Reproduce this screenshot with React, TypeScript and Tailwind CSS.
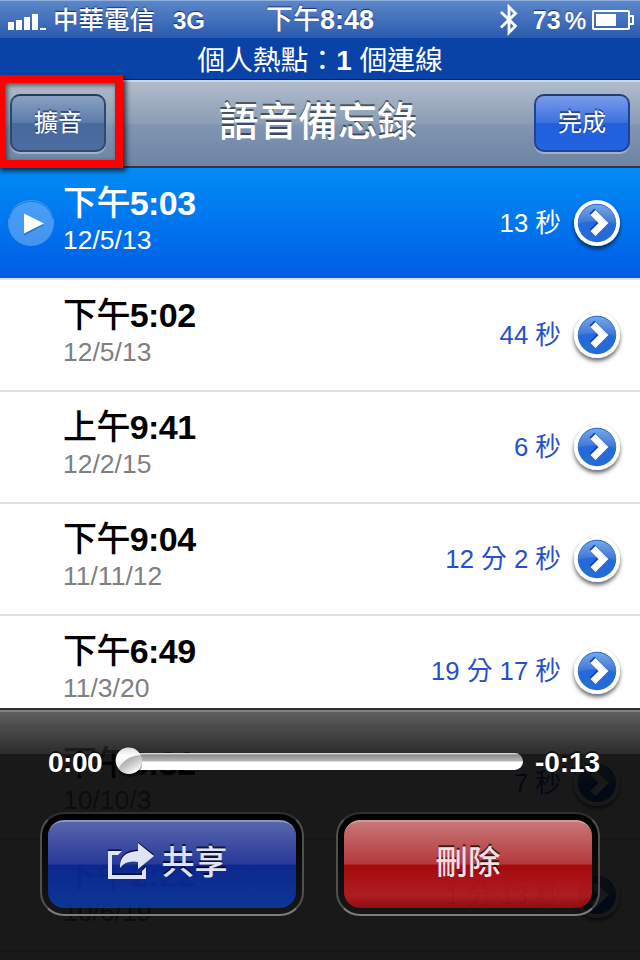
import React from 'react'

interface Memo {
  period: string
  time: string
  date: string
  duration: string
}

const memos: Memo[] = [
  { period: '下午', time: '5:03', date: '12/5/13', duration: '13 秒' },
  { period: '下午', time: '5:02', date: '12/5/13', duration: '44 秒' },
  { period: '上午', time: '9:41', date: '12/2/15', duration: '6 秒' },
  { period: '下午', time: '9:04', date: '11/11/12', duration: '12 分 2 秒' },
  { period: '下午', time: '6:49', date: '11/3/20', duration: '19 分 17 秒' },
  { period: '下午', time: '3:32', date: '10/10/3', duration: '7 秒' },
  { period: '下午', time: '2:22', date: '10/6/19', duration: '1 分 13 秒' },
]

const DetailButton = () => (
  <svg className="ml-[8px] shrink-0" width="56" height="64" viewBox="0 0 56 64">
    <defs>
      <linearGradient id="disc" x1="0" y1="0" x2="0" y2="1">
        <stop offset="0" stopColor="#7aa5e6" />
        <stop offset="1" stopColor="#3a74d4" />
      </linearGradient>
      <filter id="discShadow" x="-30%" y="-30%" width="160%" height="160%">
        <feDropShadow dx="0" dy="3" stdDeviation="2" floodColor="#000" floodOpacity="0.6" />
      </filter>
    </defs>
    <circle cx="28" cy="32" r="23" fill="#fff" filter="url(#discShadow)" />
    <circle cx="28" cy="32" r="19.2" fill="#246ad9" />
    <path d="M8.800 33A19.2 19.2 0 0 1 47.200 33Q28 27 8.800 33Z" fill="url(#disc)" />
    <path d="M23 20L33.500 30.500L23 41" fill="none" stroke="#1046b4" strokeWidth="7" />
    <path d="M24 21.500L34.500 32L24 42.500" fill="none" stroke="#fff" strokeWidth="7" />
  </svg>
)

const MemoRow = ({ memo, selected }: { memo: Memo; selected: boolean }) => (
  <li
    className={`flex h-[112px] shrink-0 items-center border-b-2 border-[#e0e0e0] pr-[15px] ${
      selected ? 'bg-linear-to-b from-[#058cf5] to-[#015de6] text-white' : 'bg-white text-black'
    }`}
  >
    <div className="flex w-[63px] shrink-0 items-center pl-2">
      {selected && (
        <svg width="46" height="46" viewBox="0 0 46 46">
          <circle cx="23" cy="23" r="23" fill="#fff" fillOpacity="0.27" />
          <path d="M1 19A22.5 22.5 0 0 1 45 19" fill="none" stroke="#0b5cb8" strokeOpacity="0.6" />
          <path d="M16 15.500L36 25L16 35.500Z" fill="#0a4ea8" fillOpacity="0.5" />
          <path d="M16 13.500L36 23.500L16 33.500Z" fill="#fff" />
        </svg>
      )}
    </div>
    <div className="flex-1 pb-1">
      <div className="h-[38px] text-[34px] leading-[38px] font-bold tracking-[-0.6px]">
        <span className="font-medium">{memo.period}</span>
        {memo.time}
      </div>
      <div className={`h-[36px] text-[26.5px] leading-[36px] ${selected ? 'text-white' : 'text-[#7f7f7f]'}`}>
        {memo.date}
      </div>
    </div>
    <div className={`text-[25.7px] leading-[36px] ${selected ? 'text-white' : 'text-[#2450c8]'}`}>
      {memo.duration}
    </div>
    <DetailButton />
  </li>
)

const StatusBar = () => (
  <div className="flex h-[38px] shrink-0 items-center border-t border-[#8fb0dc] bg-linear-to-b from-[#5b86c9] to-[#2a5bb0] text-white [text-shadow:0_-1px_1px_rgba(0,20,80,0.7)]">
    <div className="flex flex-1 items-center pl-2">
      <svg className="mt-[3px]" width="38" height="17" viewBox="0 0 38 17" fill="#fff">
        <rect x="0" y="9" width="6" height="8" />
        <rect x="8" y="7" width="6" height="10" />
        <rect x="16" y="4" width="6" height="13" />
        <rect x="24" y="1" width="6" height="16" />
        <rect x="32" y="15" width="6" height="2" />
      </svg>
      <span className="mt-[2px] ml-[7px] text-[25.5px] leading-[37px] font-medium">中華電信</span>
      <span className="mt-[2px] ml-[18px] text-[24px] leading-[37px] font-bold">3G</span>
    </div>
    <span className="mt-px -ml-[2px] text-[27px] leading-[37px] font-bold">
      <span className="font-medium">下午</span>8:48
    </span>
    <div className="flex flex-1 items-center justify-end pr-[6px]">
      <svg width="18" height="32" viewBox="0 0 18 32" fill="none" stroke="#fff" strokeWidth="2.8">
        <path d="M1 8L15.500 22L9 28.500V3L15.500 9.500L1 23.500" />
      </svg>
      <span className="mt-px ml-[15px] text-[25px] leading-[37px] font-bold">73</span>
      <span className="mt-px ml-1 text-[24px] leading-[37px] [-webkit-text-stroke:0.5px_white]">%</span>
      <svg className="ml-[6px]" width="42" height="20" viewBox="0 0 42 20" fill="none">
        <rect x="1" y="1" width="36" height="18" rx="1" stroke="#fff" strokeWidth="2" />
        <rect x="4" y="4" width="20" height="12" fill="#fff" />
        <path d="M37 6H41V14H37" stroke="#fff" strokeWidth="2" />
      </svg>
    </div>
  </div>
)

const NavBar = () => (
  <div className="flex h-[88px] shrink-0 items-center justify-between border-t-2 border-b-2 border-t-[#cdd5df] border-b-[#2d3642] bg-[linear-gradient(#b0bccb_0%,#8a9db6_50%,#8095b2_51%,#6d84a4_100%)] px-[10px] pb-[2px] text-white">
    <button className="h-[58px] w-24 rounded-[10px] border-2 border-[#2f4a72] border-t-[#2b3a52] bg-[linear-gradient(#8aa1c1_0%,#5b7bab_50%,#48699b_51%,#4b6d9f_100%)] text-[24px] shadow-[0_2px_0_rgba(255,255,255,0.35)] [text-shadow:0_-2px_0_rgba(0,0,0,0.45)]">
      擴音
    </button>
    <h1 className="-mt-[3px] pr-[4px] text-[39.7px] leading-[80px] font-medium [text-shadow:0_-2px_0_rgba(0,0,0,0.5)]">語音備忘錄</h1>
    <button className="h-[58px] w-24 rounded-[10px] border-2 border-[#1f4297] border-t-[#263b70] bg-[linear-gradient(#7a9cea_0%,#3a70de_50%,#215fdc_51%,#2463e0_100%)] text-[24px] shadow-[0_2px_0_rgba(255,255,255,0.35)] [text-shadow:0_-2px_0_rgba(0,0,0,0.45)]">
      完成
    </button>
  </div>
)

// recessed well around the big buttons, see-through towards the bottom
const buttonWell =
  'h-[104px] w-[264px] rounded-[24px] border-2 border-x-[#505050] border-t-[#303030] border-b-[#7c7c7c] bg-linear-to-b from-black to-black/10 p-[6px]'

const Player = () => (
  <div className="absolute inset-x-0 bottom-0 h-[252px] border-t-2 border-[#303030] bg-black/90">
    <div className="absolute inset-x-0 top-0 h-[44px] border-t-2 border-white/40 bg-linear-to-b from-white/30 to-white/8" />
    <div className="relative flex h-[102px] items-center pr-10 pl-12 text-[28px] font-bold text-white [text-shadow:0_-2px_0_rgba(0,0,0,0.6)]">
      <span className="mt-[3px] w-[70px] tracking-[-0.5px]">0:00</span>
      <div className="relative h-[17px] w-[405px] rounded-full bg-[linear-gradient(#f0f0f0_0%,#8c8c8c_12%,#b8b8b8_48%,#fff_52%,#fff_100%)]">
        <svg className="absolute -top-[6px] -left-[3px]" width="30" height="34" viewBox="0 0 30 34">
          <defs>
            <linearGradient id="knob" x1="0.2" y1="0.2" x2="0.7" y2="1">
              <stop offset="0" stopColor="#8c8c8c" />
              <stop offset="0.55" stopColor="#c4c4c4" />
              <stop offset="1" stopColor="#fff" />
            </linearGradient>
            <linearGradient id="knobShine" x1="0" y1="0" x2="0" y2="1">
              <stop offset="0" stopColor="#dcdcdc" />
              <stop offset="0.4" stopColor="#fff" />
              <stop offset="1" stopColor="#e4e4e4" />
            </linearGradient>
          </defs>
          <ellipse cx="14" cy="17" rx="13" ry="13" fill="#000" fillOpacity="0.35" />
          <circle cx="14" cy="14" r="13" fill="url(#knob)" />
          <path d="M3.500 21.500A13 13 0 1 1 25.500 8Q11 8.500 3.500 21.500Z" fill="url(#knobShine)" />
        </svg>
      </div>
      <span className="mt-[3px] ml-[12px] tracking-[-0.1px]">-0:13</span>
    </div>
    <div className="relative flex justify-between px-10">
      <div className={buttonWell}>
        <button className="flex h-full w-full items-center justify-center rounded-[16px] border-t-2 border-[#8a93c4] bg-[linear-gradient(#5865ab_0%,#27399a_49%,rgba(13,51,197,0.7)_50%,rgba(7,70,204,0.7)_100%)] pr-[9px] pb-[4px] text-[33px] font-medium text-[#e0e3f3] [text-shadow:0_-2px_0_rgba(0,0,0,0.7)]">
          <svg className="-mt-[5px] mr-2 shrink-0" width="46" height="38" viewBox="0 0 46 38">
            <g fill="#060d3c" transform="translate(0 -1.500)">
              <path d="M0 9H14L10 13H4V33H34V29L38 25V37H0Z" />
              <path d="M30 1.500L46 14L30 27V20Q18 18 12 26Q11 10 30 9Z" />
            </g>
            <g fill="#e0e3f3">
              <path d="M0 9H14L10 13H4V33H34V29L38 25V37H0Z" />
              <path d="M30 1L46 14L30 27V20Q18 18 12 26Q11 10 30 9Z" />
            </g>
          </svg>
          共享
        </button>
      </div>
      <div className={buttonWell}>
        <button className="h-full w-full rounded-[16px] border-t-2 border-[#d09a9a] bg-[linear-gradient(#c77678_0%,#b5383a_49%,rgba(231,9,11,0.7)_50%,rgba(240,34,40,0.7)_85%,rgba(197,9,14,0.7)_100%)] pb-[3px] text-[32.5px] font-medium text-[#f3dfe0] [text-shadow:0_-2px_0_rgba(0,0,0,0.7)]">
          刪除
        </button>
      </div>
    </div>
  </div>
)

export default function App() {
  return (
    <main className="relative flex h-[960px] w-[640px] flex-col overflow-hidden bg-white font-['Liberation_Sans','Noto_Sans_CJK_TC',sans-serif]">
      <StatusBar />
      <div className="h-[42px] shrink-0 border-b border-[#06215c] bg-[#0a43a8] text-center text-[27.8px] leading-[46px] text-white">
        個人熱點：<b>1</b> 個連線
      </div>
      <NavBar />
      <ul className="flex flex-col">
        {memos.map((memo, i) => (
          <MemoRow key={i} memo={memo} selected={i === 0} />
        ))}
      </ul>
      <Player />
      {/* callout around the speaker button */}
      <div className="absolute top-[75px] -left-[3px] h-[93px] w-[126px] border-8 border-[#fe0000] shadow-[3px_3px_5px_rgba(0,0,0,0.7),inset_2px_2px_5px_rgba(0,0,0,0.6)]" />
    </main>
  )
}
